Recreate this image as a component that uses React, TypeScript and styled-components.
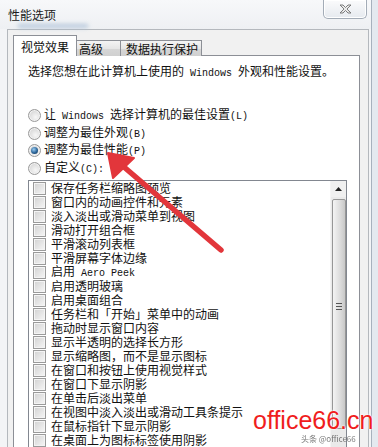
import React from "react";
import styled, { createGlobalStyle, css } from "styled-components";

const GlobalStyle = createGlobalStyle`
  html, body {
    margin: 0;
    padding: 0;
    width: 378px;
    height: 447px;
    overflow: hidden;
    background: #e4e9ef;
  }
  * {
    box-sizing: border-box;
  }
`;

const RADIOS = [
  { label: "让 Windows 选择计算机的最佳设置(L)", checked: false },
  { label: "调整为最佳外观(B)", checked: false },
  { label: "调整为最佳性能(P)", checked: true },
  { label: "自定义(C):", checked: false },
];

const OPTIONS = [
  "保存任务栏缩略图预览",
  "窗口内的动画控件和元素",
  "淡入淡出或滑动菜单到视图",
  "滑动打开组合框",
  "平滑滚动列表框",
  "平滑屏幕字体边缘",
  "启用 Aero Peek",
  "启用透明玻璃",
  "启用桌面组合",
  "任务栏和「开始」菜单中的动画",
  "拖动时显示窗口内容",
  "显示半透明的选择长方形",
  "显示缩略图，而不是显示图标",
  "在窗口和按钮上使用视觉样式",
  "在窗口下显示阴影",
  "在单击后淡出菜单",
  "在视图中淡入淡出或滑动工具条提示",
  "在鼠标指针下显示阴影",
  "在桌面上为图标标签使用阴影",
];

const TABS = [
  { label: "视觉效果", width: 64, pad: 7, active: true },
  { label: "高级", width: 46, pad: 3, active: false },
  { label: "数据执行保护", width: 82, pad: 5, active: false },
];

// latin runs are drawn half-width, like SimSun does
const Mixed: React.FC<{ text: string }> = ({ text }) => (
  <>
    {text.split(/([\x20-\x7e]+)/).map((part, i) =>
      /^[\x20-\x7e]+$/.test(part) ? <Latin key={i}>{part}</Latin> : part
    )}
  </>
);

export default function App() {
  return (
    <>
      <GlobalStyle />
      <Window>
        <TitleBar>
          <TitleCol>
            <Title>性能选项</Title>
            <Smudge />
          </TitleCol>
          <CloseButton>
            <svg width="13" height="10" viewBox="0 0 13 10">
              <path
                d="M1 1h3l2.5 2.5L9 1h3L8 5l4 4H9L6.5 6.5 4 9H1l4-4z"
                fill="#e9e9e9"
                stroke="#707070"
                strokeWidth="0.9"
                strokeLinejoin="round"
              />
            </svg>
          </CloseButton>
        </TitleBar>

        <Frame>
          <TabRow>
            {TABS.map((t) => (
              <Tab key={t.label} $active={t.active} $w={t.width} $pad={t.pad}>
                {t.label}
              </Tab>
            ))}
          </TabRow>
          <Panel>
            <Intro>
              <Mixed text="选择您想在此计算机上使用的 Windows 外观和性能设置。" />
            </Intro>
            <RadioGroup>
              {RADIOS.map((r) => (
                <RadioRow key={r.label}>
                  <Radio $checked={r.checked} />
                  <span>
                    <Mixed text={r.label} />
                  </span>
                </RadioRow>
              ))}
            </RadioGroup>
            <ListBox>
              <Rows>
                {OPTIONS.map((o, i) => (
                  <CheckRow key={i}>
                    <Check />
                    <span>
                      <Mixed text={o} />
                    </span>
                  </CheckRow>
                ))}
              </Rows>
              <ScrollBar>
                <ScrollButton>
                  <svg width="7" height="4" viewBox="0 0 7 4">
                    <path d="M0 4L3.5 0L7 4z" fill="#222" />
                  </svg>
                </ScrollButton>
                <Thumb>
                  <Grip />
                </Thumb>
              </ScrollBar>
            </ListBox>
          </Panel>
        </Frame>
      </Window>

      <Annotation width="378" height="447" viewBox="0 0 378 447">
        <line
          x1="221"
          y1="250"
          x2="124"
          y2="167"
          stroke="#e2363b"
          strokeWidth="5.5"
          strokeLinecap="round"
        />
        <polygon
          points="108,153 134,158 113,178"
          fill="#e2363b"
          stroke="#e2363b"
          strokeWidth="2"
          strokeLinejoin="round"
        />
      </Annotation>

      <Watermark>office66.cn</Watermark>
      <Credit>头条 @office66</Credit>
    </>
  );
}

const cjk = `"Noto Sans CJK SC", "Noto Sans", sans-serif`;

const Window = styled.div`
  width: 372px;
  height: 447px;
  overflow: hidden;
  background: #f3f4f6;
  border-right: 1px solid #a7b1bd;
  font-family: ${cjk};
  font-size: 12px;
  line-height: 14px;
  color: #111;
  display: flex;
  flex-direction: column;
`;

const TitleBar = styled.div`
  display: flex;
  justify-content: space-between;
  align-items: flex-start;
  height: 29px;
  flex-shrink: 0;
  padding-right: 4px;
  background: linear-gradient(#f7f8fa, #eef0f3);
`;

const TitleCol = styled.div`
  display: flex;
  flex-direction: column;
  padding: 8px 0 0 8px;
`;

const Title = styled.div`
  line-height: 14px;
  color: #1b1b1b;
`;

const Smudge = styled.div`
  width: 70px;
  height: 4px;
  margin: 2px 0 0 10px;
  background: #a9bfd6;
  filter: blur(2px);
  opacity: 0.8;
`;

const CloseButton = styled.div`
  width: 44px;
  height: 19px;
  display: flex;
  align-items: center;
  justify-content: center;
  border: 1px solid #a3acb7;
  border-top: none;
  border-radius: 0 0 5px 5px;
  background: linear-gradient(#fbfbfc, #e6eaef);
  box-shadow: inset 0 0 0 1px #ffffff;
`;

const Frame = styled.div`
  flex: 1;
  min-height: 0;
  overflow: hidden;
  margin-left: 7px;
  width: 362px;
  border: 1px solid #b4b8bd;
  border-bottom: none;
  background: #f1f1f1;
  padding: 6px 7px 0 5px;
  display: flex;
  flex-direction: column;
`;

const TabRow = styled.div`
  display: flex;
  align-items: flex-end;
  height: 20px;
  flex-shrink: 0;
  position: relative;
  z-index: 1;
  margin-bottom: -1px;
`;

const Tab = styled.div<{ $active: boolean; $w: number; $pad: number }>`
  width: ${(p) => p.$w}px;
  padding-left: ${(p) => p.$pad}px;
  border: 1px solid #8c8f96;
  border-bottom: none;
  line-height: 15px;
  white-space: nowrap;
  ${(p) =>
    p.$active
      ? css`
          height: 21px;
          padding-top: 3px;
          background: #ffffff;
          margin-right: -1px;
          position: relative;
          z-index: 2;
        `
      : css`
          height: 16px;
          background: linear-gradient(#f4f4f4, #e6e6e6 50%, #d6d6d6 51%, #d0d0d0);
          & + & {
            margin-left: -1px;
          }
        `}
`;

const Panel = styled.div`
  width: 347px;
  flex: 1;
  min-height: 0;
  background: #ffffff;
  border: 1px solid #8c8f96;
  border-bottom: none;
  padding: 7px 0 0 14px;
  display: flex;
  flex-direction: column;
`;

const Latin = styled.span`
  font-family: "Liberation Mono", monospace;
  font-size: 10px;
`;

const Intro = styled.div`
  line-height: 16px;
  margin-bottom: 25px;
  white-space: nowrap;
`;

const RadioGroup = styled.div`
  display: flex;
  flex-direction: column;
  margin-bottom: 3px;
`;

const RadioRow = styled.div`
  height: 17.5px;
  display: flex;
  align-items: center;
  white-space: nowrap;
`;

const Radio = styled.span<{ $checked: boolean }>`
  width: 13px;
  height: 13px;
  margin-right: 3px;
  border-radius: 50%;
  border: 1px solid #9a9a9a;
  background: radial-gradient(circle at 60% 65%, #f7f7f7, #d4d4d4 80%);
  box-shadow: inset 0 0 0 1px #f2f2f2;
  display: flex;
  align-items: center;
  justify-content: center;
  ${(p) =>
    p.$checked &&
    css`
      &::after {
        content: "";
        width: 7px;
        height: 7px;
        border-radius: 50%;
        background: radial-gradient(circle at 40% 35%, #9ccdf2, #2a6498 55%, #0f2c47);
      }
    `}
`;

const ListBox = styled.div`
  width: 319px;
  height: 300px;
  border: 1px solid #828790;
  display: flex;
  overflow: hidden;
  flex-shrink: 0;
`;

const Rows = styled.div`
  flex: 1;
  display: flex;
  flex-direction: column;
`;

const CheckRow = styled.div`
  height: 14px;
  line-height: 14px;
  display: flex;
  align-items: center;
  padding-left: 4px;
  white-space: nowrap;
`;

const Check = styled.span`
  width: 13px;
  height: 13px;
  margin-right: 5px;
  flex-shrink: 0;
  border: 1px solid #9a9a9a;
  background: linear-gradient(135deg, #d2d2d2, #f6f6f6);
  box-shadow: inset 0 0 0 1px #f4f4f4;
`;

const ScrollBar = styled.div`
  width: 16px;
  display: flex;
  flex-direction: column;
  align-items: center;
  background: #eaeaea;
  border-left: 1px solid #f4f4f4;
`;

const ScrollButton = styled.div`
  width: 16px;
  height: 16px;
  display: flex;
  align-items: center;
  justify-content: center;
  background: #f0f0f0;
`;

const Thumb = styled.div`
  width: 14px;
  height: 230px;
  margin-top: 2px;
  border: 1px solid #979797;
  border-radius: 2px;
  background: linear-gradient(90deg, #f4f4f4, #dcdcdc 60%, #c8c8c8);
  display: flex;
  justify-content: center;
  padding-top: 103px;
`;

const Grip = styled.div`
  width: 6px;
  height: 7px;
  background: repeating-linear-gradient(#555 0 1px, transparent 1px 3px);
`;

const Annotation = styled.svg`
  position: absolute;
  left: 0;
  top: 0;
  pointer-events: none;
`;

const Watermark = styled.div`
  position: absolute;
  left: 253px;
  top: 408px;
  font-family: "Liberation Sans", Arial, sans-serif;
  font-size: 25px;
  line-height: 25px;
  color: #f01d1d;
  text-shadow: 0 0 2px #ffffff, 0 0 2px #ffffff;
`;

const Credit = styled.div`
  position: absolute;
  left: 301px;
  top: 434px;
  font-family: ${cjk};
  font-size: 8px;
  line-height: 9px;
  color: #555;
  opacity: 0.8;
`;
